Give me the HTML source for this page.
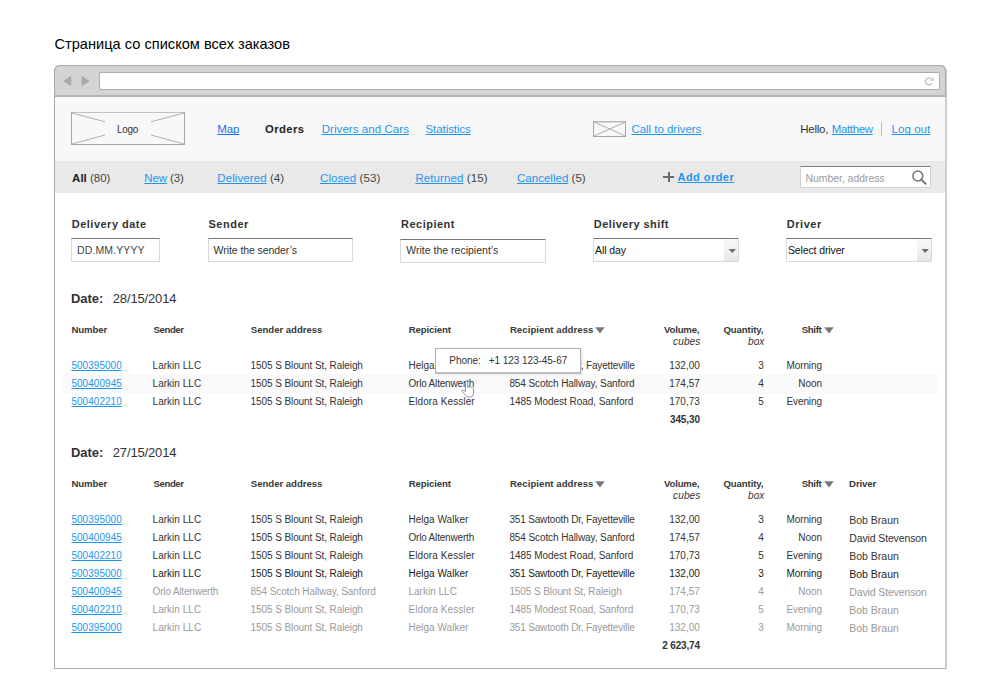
<!DOCTYPE html>
<html><head><meta charset="utf-8">
<style>
html,body{margin:0;padding:0;background:#fff;}
body{width:1000px;height:699px;position:relative;overflow:hidden;font-family:"Liberation Sans",sans-serif;}
.t{position:absolute;white-space:nowrap;text-decoration-skip-ink:none;}
u{text-decoration-skip-ink:none;}
.abs{position:absolute;}
.frame{position:absolute;left:54px;top:65px;width:890px;height:602px;border:1px solid #a9a9a9;border-right:2px solid #cdcdcd;border-radius:6px 6px 0 0;background:#fff;}
.chrome{position:absolute;left:54px;top:65px;width:892px;background:#d4d4d4;border:1px solid #aaa;border-bottom:2px solid #b3b3b3;border-radius:6px 6px 0 0;box-sizing:border-box;height:32px;}
.url{position:absolute;left:99px;top:72px;width:839px;height:16px;background:#fff;border:1px solid #ababab;border-radius:2px;}
.nav{position:absolute;left:55px;top:97px;width:890px;height:64px;background:#f8f8f8;}
.tabs{position:absolute;left:55px;top:161px;width:890px;height:32px;background:#e9e9e9;}
.inp{position:absolute;background:#fff;border:1px solid #d9d9d9;border-top-color:#777;}
</style></head><body>
<div class="t" style="top:35.24px;height:19px;line-height:19px;font-size:14.6px;color:#000;letter-spacing:0.010px;left:54.5px;">Страница со списком всех заказов</div>
<div class="frame"></div>
<div class="chrome"></div>
<div class="url"></div>
<svg class="abs" style="left:60px;top:72px" width="36" height="18" viewBox="0 0 36 18">
<path d="M3 9 L11.2 3.8 L11.2 14.2 Z" fill="#a9a9a9"/><path d="M21.6 3.8 L29.9 9 L21.6 14.2 Z" fill="#a9a9a9"/></svg>
<svg class="abs" style="left:922px;top:75px" width="14" height="13" viewBox="0 0 14 13">
<path d="M9.6 4.2 A3.4 3.4 0 1 0 9.94 8.1" fill="none" stroke="#c9c9c9" stroke-width="1.7"/><path d="M7.8 5.7 L11.7 2.2 L11.7 5.9 Z" fill="#c9c9c9"/></svg>
<div class="nav"></div>
<svg class="abs" style="left:71px;top:112px" width="114" height="33" viewBox="0 0 114 33">
<rect x="0.5" y="0.5" width="113" height="32" fill="none" stroke="#a6a6a6"/><path d="M1 0.5 L113 0.5" stroke="#c2c2c2" stroke-width="1"/>
<path d="M1 1 L34 9.8 M113 1 L80 9.8 M1 32 L34 23 M113 32 L80 23" stroke="#b0b0b0" stroke-width="1"/></svg>
<div class="t" style="top:123.03px;height:13px;line-height:13px;font-size:10px;color:#333;letter-spacing:-0.250px;left:-72.5px;width:400px;text-align:center;">Logo</div>
<div class="t" style="top:122.11px;height:15px;line-height:15px;font-size:11.5px;color:#1a6ff0;text-decoration:underline;letter-spacing:-0.094px;left:217.3px;">Map</div>
<div class="t" style="top:122.18px;height:15px;line-height:15px;font-size:11.3px;color:#222;font-weight:bold;letter-spacing:0.408px;left:265px;">Orders</div>
<div class="t" style="top:122.11px;height:15px;line-height:15px;font-size:11.5px;color:#1e96f0;text-decoration:underline;letter-spacing:0.065px;left:321.7px;">Drivers and Cars</div>
<div class="t" style="top:122.11px;height:15px;line-height:15px;font-size:11.5px;color:#1e96f0;text-decoration:underline;letter-spacing:-0.076px;left:425.5px;">Statistics</div>
<svg class="abs" style="left:593px;top:121px" width="34" height="16" viewBox="0 0 34 16">
<rect x="0.5" y="0.5" width="32" height="15" fill="none" stroke="#a6a6a6"/>
<path d="M0.5 1 L32.5 1" stroke="#c0c0c0" stroke-width="1"/>
<path d="M1 1 L32.5 15 M32.5 1 L1 15" stroke="#b0b0b0" stroke-width="1"/></svg>
<div class="t" style="top:122.11px;height:15px;line-height:15px;font-size:11.5px;color:#1e96f0;text-decoration:underline;letter-spacing:-0.025px;left:631.4px;">Call to drivers</div>
<div class="t" style="top:122.11px;height:15px;line-height:15px;font-size:11.5px;color:#333;letter-spacing:-0.237px;left:800.2px;">Hello,</div>
<div class="t" style="top:122.11px;height:15px;line-height:15px;font-size:11.5px;color:#1e96f0;text-decoration:underline;letter-spacing:-0.342px;left:831.7px;">Matthew</div>
<div class="abs" style="left:881px;top:122px;width:1px;height:14px;background:#bbb"></div>
<div class="t" style="top:122.11px;height:15px;line-height:15px;font-size:11.5px;color:#1e96f0;text-decoration:underline;letter-spacing:0.038px;left:891.6px;">Log out</div>
<div class="tabs"></div>
<div class="t" style="top:170.51px;height:15px;line-height:15px;font-size:11.5px;color:#444;left:72.1px;"><b style="color:#222">All</b> (80)</div>
<div class="t" style="top:170.51px;height:15px;line-height:15px;font-size:11.5px;color:#444;letter-spacing:-0.123px;left:144.3px;"><u style="color:#1e96f0">New</u> (3)</div>
<div class="t" style="top:170.51px;height:15px;line-height:15px;font-size:11.5px;color:#444;letter-spacing:0.086px;left:217.3px;"><u style="color:#1e96f0">Delivered</u> (4)</div>
<div class="t" style="top:170.51px;height:15px;line-height:15px;font-size:11.5px;color:#444;letter-spacing:0.087px;left:320px;"><u style="color:#1e96f0">Closed</u> (53)</div>
<div class="t" style="top:170.51px;height:15px;line-height:15px;font-size:11.5px;color:#444;letter-spacing:0.093px;left:415.4px;"><u style="color:#1e96f0">Returned</u> (15)</div>
<div class="t" style="top:170.51px;height:15px;line-height:15px;font-size:11.5px;color:#444;letter-spacing:0.025px;left:517px;"><u style="color:#1e96f0">Cancelled</u> (5)</div>
<div class="abs" style="left:663px;top:176px;width:11px;height:2px;background:#6a6a6a"></div>
<div class="abs" style="left:667.5px;top:172px;width:2px;height:10px;background:#6a6a6a"></div>
<div class="t" style="top:170.49px;height:14px;line-height:14px;font-size:11px;color:#1e96f0;font-weight:bold;text-decoration:underline;letter-spacing:0.457px;left:677.5px;">Add order</div>
<div class="abs" style="left:800px;top:166px;width:129px;height:20px;background:#fff;border:1px solid #cfcfcf;border-top-color:#808080"></div>
<div class="t" style="top:171.36px;height:14px;line-height:14px;font-size:10.5px;color:#9a9a9a;letter-spacing:-0.061px;left:805.5px;">Number, address</div>
<svg class="abs" style="left:908px;top:167px" width="20" height="20" viewBox="0 0 20 20">
<circle cx="9.8" cy="9" r="4.9" fill="none" stroke="#727272" stroke-width="1.5"/><path d="M13.4 12.6 L17.6 16.8" stroke="#727272" stroke-width="2" stroke-linecap="round"/></svg>
<div class="t" style="top:217.19px;height:14px;line-height:14px;font-size:11px;color:#333;font-weight:bold;letter-spacing:0.485px;left:71.8px;">Delivery date</div>
<div class="t" style="top:217.19px;height:14px;line-height:14px;font-size:11px;color:#333;font-weight:bold;letter-spacing:0.501px;left:208.5px;">Sender</div>
<div class="t" style="top:217.19px;height:14px;line-height:14px;font-size:11px;color:#333;font-weight:bold;letter-spacing:0.491px;left:401px;">Recipient</div>
<div class="t" style="top:217.19px;height:14px;line-height:14px;font-size:11px;color:#333;font-weight:bold;letter-spacing:0.423px;left:593.8px;">Delivery shift</div>
<div class="t" style="top:217.19px;height:14px;line-height:14px;font-size:11px;color:#333;font-weight:bold;letter-spacing:0.538px;left:786.8px;">Driver</div>
<div class="inp" style="left:71px;top:238px;width:87px;height:22px"></div>
<div class="t" style="top:243.36px;height:14px;line-height:14px;font-size:10.5px;color:#444;letter-spacing:0.121px;left:77px;">DD.MM.YYYY</div>
<div class="inp" style="left:208px;top:238px;width:143px;height:22px"></div>
<div class="t" style="top:242.86px;height:14px;line-height:14px;font-size:10.5px;color:#333;letter-spacing:-0.071px;left:213.6px;">Write the sender’s</div>
<div class="inp" style="left:400px;top:239px;width:144px;height:22px"></div>
<div class="t" style="top:243.16px;height:14px;line-height:14px;font-size:10.5px;color:#333;letter-spacing:0.010px;left:406.2px;">Write the recipient’s</div>
<div class="inp" style="left:593px;top:238px;width:144px;height:22px"></div>
<div class="abs" style="left:724px;top:239px;width:14px;height:22px;background:linear-gradient(#f8f8f8,#f2f2f2 45%,#e6e6e6)"></div>
<svg class="abs" style="left:728px;top:248px" width="9" height="6" viewBox="0 0 9 6"><path d="M0.5 1 L8 1 L4.25 5 Z" fill="#6e6e6e"/></svg>
<div class="t" style="top:243.36px;height:14px;line-height:14px;font-size:10.5px;color:#111;letter-spacing:-0.100px;left:595px;">All day</div>
<div class="inp" style="left:786px;top:238px;width:144px;height:22px"></div>
<div class="abs" style="left:917px;top:239px;width:14px;height:22px;background:linear-gradient(#f8f8f8,#f2f2f2 45%,#e6e6e6)"></div>
<svg class="abs" style="left:921px;top:248px" width="9" height="6" viewBox="0 0 9 6"><path d="M0.5 1 L8 1 L4.25 5 Z" fill="#6e6e6e"/></svg>
<div class="t" style="top:243.36px;height:14px;line-height:14px;font-size:10.5px;color:#111;letter-spacing:-0.116px;left:787.9px;">Select driver</div>
<div class="t" style="top:290.49px;height:17px;line-height:17px;font-size:13px;color:#333;font-weight:bold;letter-spacing:-0.055px;left:71px;">Date:</div>
<div class="t" style="top:290.49px;height:17px;line-height:17px;font-size:13px;color:#333;letter-spacing:-0.158px;left:112.8px;">28/15/2014</div>
<div class="t" style="top:323.97px;height:12px;line-height:12px;font-size:9.6px;color:#383838;font-weight:bold;letter-spacing:-0.084px;left:71.5px;">Number</div>
<div class="t" style="top:323.97px;height:12px;line-height:12px;font-size:9.6px;color:#383838;font-weight:bold;letter-spacing:-0.422px;left:153.6px;">Sender</div>
<div class="t" style="top:323.97px;height:12px;line-height:12px;font-size:9.6px;color:#383838;font-weight:bold;letter-spacing:-0.025px;left:250.8px;">Sender address</div>
<div class="t" style="top:323.97px;height:12px;line-height:12px;font-size:9.6px;color:#383838;font-weight:bold;letter-spacing:-0.122px;left:408.7px;">Repicient</div>
<div class="t" style="top:323.97px;height:12px;line-height:12px;font-size:9.6px;color:#383838;font-weight:bold;letter-spacing:0.056px;left:509.9px;">Recipient address</div>
<svg class="abs" style="left:595.3px;top:327.0px" width="10" height="7" viewBox="0 0 10 7"><path d="M0.6 0.4 L9.4 0.4 L5 6.3 Z" fill="#777" stroke="#777" stroke-width="0.4" stroke-linejoin="round"/></svg>
<div class="t" style="top:323.97px;height:12px;line-height:12px;font-size:9.6px;color:#383838;font-weight:bold;letter-spacing:-0.192px;right:300.69px;text-align:right;">Volume,</div>
<div class="t" style="top:335.33px;height:13px;line-height:13px;font-size:10px;color:#333;font-style:italic;letter-spacing:0.150px;right:299.55px;text-align:right;">cubes</div>
<div class="t" style="top:323.97px;height:12px;line-height:12px;font-size:9.6px;color:#383838;font-weight:bold;letter-spacing:-0.105px;right:236.60px;text-align:right;">Quantity,</div>
<div class="t" style="top:335.33px;height:13px;line-height:13px;font-size:10px;color:#333;font-style:italic;right:235.80px;text-align:right;">box</div>
<div class="t" style="top:323.97px;height:12px;line-height:12px;font-size:9.6px;color:#383838;font-weight:bold;letter-spacing:-0.295px;right:178.49px;text-align:right;">Shift</div>
<svg class="abs" style="left:823.6px;top:327.0px" width="10" height="7" viewBox="0 0 10 7"><path d="M0.6 0.4 L9.4 0.4 L5 6.3 Z" fill="#777" stroke="#777" stroke-width="0.4" stroke-linejoin="round"/></svg>
<div class="t" style="top:359.03px;height:13px;line-height:13px;font-size:10px;color:#1e96f0;text-decoration:underline;letter-spacing:0.038px;left:71.4px;">500395000</div>
<div class="t" style="top:359.03px;height:13px;line-height:13px;font-size:10px;color:#333;letter-spacing:0.017px;left:152.6px;">Larkin LLC</div>
<div class="t" style="top:359.03px;height:13px;line-height:13px;font-size:10px;color:#333;letter-spacing:-0.092px;left:250.6px;">1505 S Blount St, Raleigh</div>
<div class="t" style="top:359.03px;height:13px;line-height:13px;font-size:10px;color:#333;letter-spacing:0.032px;left:408.4px;">Helga Walker</div>
<div class="t" style="top:359.03px;height:13px;line-height:13px;font-size:10px;color:#333;letter-spacing:-0.168px;left:509.4px;">351 Sawtooth Dr, Fayetteville</div>
<div class="t" style="top:359.03px;height:13px;line-height:13px;font-size:10px;color:#333;right:300.20px;text-align:right;">132,00</div>
<div class="t" style="top:359.03px;height:13px;line-height:13px;font-size:10px;color:#333;right:236.20px;text-align:right;">3</div>
<div class="t" style="top:359.03px;height:13px;line-height:13px;font-size:10px;color:#333;letter-spacing:-0.092px;right:178.09px;text-align:right;">Morning</div>
<div class="abs" style="left:63px;top:374.0px;width:876px;height:20px;background:#fafafa"></div>
<div class="t" style="top:377.03px;height:13px;line-height:13px;font-size:10px;color:#1e96f0;text-decoration:underline;letter-spacing:0.044px;left:71.4px;">500400945</div>
<div class="t" style="top:377.03px;height:13px;line-height:13px;font-size:10px;color:#333;letter-spacing:0.017px;left:152.6px;">Larkin LLC</div>
<div class="t" style="top:377.03px;height:13px;line-height:13px;font-size:10px;color:#333;letter-spacing:-0.092px;left:250.6px;">1505 S Blount St, Raleigh</div>
<div class="t" style="top:377.03px;height:13px;line-height:13px;font-size:10px;color:#333;letter-spacing:-0.182px;left:408.4px;">Orlo Altenwerth</div>
<div class="t" style="top:377.03px;height:13px;line-height:13px;font-size:10px;color:#333;letter-spacing:-0.098px;left:509.4px;">854 Scotch Hallway, Sanford</div>
<div class="t" style="top:377.03px;height:13px;line-height:13px;font-size:10px;color:#333;right:300.20px;text-align:right;">174,57</div>
<div class="t" style="top:377.03px;height:13px;line-height:13px;font-size:10px;color:#333;right:236.20px;text-align:right;">4</div>
<div class="t" style="top:377.03px;height:13px;line-height:13px;font-size:10px;color:#333;letter-spacing:-0.050px;right:178.05px;text-align:right;">Noon</div>
<div class="t" style="top:395.03px;height:13px;line-height:13px;font-size:10px;color:#1e96f0;text-decoration:underline;letter-spacing:0.038px;left:71.4px;">500402210</div>
<div class="t" style="top:395.03px;height:13px;line-height:13px;font-size:10px;color:#333;letter-spacing:0.017px;left:152.6px;">Larkin LLC</div>
<div class="t" style="top:395.03px;height:13px;line-height:13px;font-size:10px;color:#333;letter-spacing:-0.092px;left:250.6px;">1505 S Blount St, Raleigh</div>
<div class="t" style="top:395.03px;height:13px;line-height:13px;font-size:10px;color:#333;letter-spacing:0.096px;left:408.4px;">Eldora Kessler</div>
<div class="t" style="top:395.03px;height:13px;line-height:13px;font-size:10px;color:#333;letter-spacing:-0.044px;left:509.4px;">1485 Modest Road, Sanford</div>
<div class="t" style="top:395.03px;height:13px;line-height:13px;font-size:10px;color:#333;right:300.20px;text-align:right;">170,73</div>
<div class="t" style="top:395.03px;height:13px;line-height:13px;font-size:10px;color:#333;right:236.20px;text-align:right;">5</div>
<div class="t" style="top:395.03px;height:13px;line-height:13px;font-size:10px;color:#333;letter-spacing:-0.100px;right:178.10px;text-align:right;">Evening</div>
<div class="t" style="top:413.03px;height:13px;line-height:13px;font-size:10px;color:#333;font-weight:bold;letter-spacing:-0.110px;right:300.11px;text-align:right;">345,30</div>
<div class="t" style="top:444.49px;height:17px;line-height:17px;font-size:13px;color:#333;font-weight:bold;letter-spacing:-0.055px;left:71px;">Date:</div>
<div class="t" style="top:444.49px;height:17px;line-height:17px;font-size:13px;color:#333;letter-spacing:-0.158px;left:112.8px;">27/15/2014</div>
<div class="t" style="top:477.97px;height:12px;line-height:12px;font-size:9.6px;color:#383838;font-weight:bold;letter-spacing:-0.084px;left:71.5px;">Number</div>
<div class="t" style="top:477.97px;height:12px;line-height:12px;font-size:9.6px;color:#383838;font-weight:bold;letter-spacing:-0.422px;left:153.6px;">Sender</div>
<div class="t" style="top:477.97px;height:12px;line-height:12px;font-size:9.6px;color:#383838;font-weight:bold;letter-spacing:-0.025px;left:250.8px;">Sender address</div>
<div class="t" style="top:477.97px;height:12px;line-height:12px;font-size:9.6px;color:#383838;font-weight:bold;letter-spacing:-0.122px;left:408.7px;">Repicient</div>
<div class="t" style="top:477.97px;height:12px;line-height:12px;font-size:9.6px;color:#383838;font-weight:bold;letter-spacing:0.056px;left:509.9px;">Recipient address</div>
<svg class="abs" style="left:595.3px;top:481.0px" width="10" height="7" viewBox="0 0 10 7"><path d="M0.6 0.4 L9.4 0.4 L5 6.3 Z" fill="#777" stroke="#777" stroke-width="0.4" stroke-linejoin="round"/></svg>
<div class="t" style="top:477.97px;height:12px;line-height:12px;font-size:9.6px;color:#383838;font-weight:bold;letter-spacing:-0.192px;right:300.69px;text-align:right;">Volume,</div>
<div class="t" style="top:489.33px;height:13px;line-height:13px;font-size:10px;color:#333;font-style:italic;letter-spacing:0.150px;right:299.55px;text-align:right;">cubes</div>
<div class="t" style="top:477.97px;height:12px;line-height:12px;font-size:9.6px;color:#383838;font-weight:bold;letter-spacing:-0.105px;right:236.60px;text-align:right;">Quantity,</div>
<div class="t" style="top:489.33px;height:13px;line-height:13px;font-size:10px;color:#333;font-style:italic;right:235.80px;text-align:right;">box</div>
<div class="t" style="top:477.97px;height:12px;line-height:12px;font-size:9.6px;color:#383838;font-weight:bold;letter-spacing:-0.295px;right:178.49px;text-align:right;">Shift</div>
<svg class="abs" style="left:823.6px;top:481.0px" width="10" height="7" viewBox="0 0 10 7"><path d="M0.6 0.4 L9.4 0.4 L5 6.3 Z" fill="#777" stroke="#777" stroke-width="0.4" stroke-linejoin="round"/></svg>
<div class="t" style="top:477.97px;height:12px;line-height:12px;font-size:9.6px;color:#383838;font-weight:bold;letter-spacing:-0.135px;left:849.1px;">Driver</div>
<div class="t" style="top:513.03px;height:13px;line-height:13px;font-size:10px;color:#1e96f0;text-decoration:underline;letter-spacing:0.038px;left:71.4px;">500395000</div>
<div class="t" style="top:513.03px;height:13px;line-height:13px;font-size:10px;color:#333;letter-spacing:0.017px;left:152.6px;">Larkin LLC</div>
<div class="t" style="top:513.03px;height:13px;line-height:13px;font-size:10px;color:#333;letter-spacing:-0.092px;left:250.6px;">1505 S Blount St, Raleigh</div>
<div class="t" style="top:513.03px;height:13px;line-height:13px;font-size:10px;color:#333;letter-spacing:0.032px;left:408.4px;">Helga Walker</div>
<div class="t" style="top:513.03px;height:13px;line-height:13px;font-size:10px;color:#333;letter-spacing:-0.168px;left:509.4px;">351 Sawtooth Dr, Fayetteville</div>
<div class="t" style="top:513.03px;height:13px;line-height:13px;font-size:10px;color:#333;right:300.20px;text-align:right;">132,00</div>
<div class="t" style="top:513.03px;height:13px;line-height:13px;font-size:10px;color:#333;right:236.20px;text-align:right;">3</div>
<div class="t" style="top:513.03px;height:13px;line-height:13px;font-size:10px;color:#333;letter-spacing:-0.092px;right:178.09px;text-align:right;">Morning</div>
<div class="t" style="top:512.86px;height:14px;line-height:14px;font-size:10.5px;color:#333;letter-spacing:-0.011px;left:849.3px;">Bob Braun</div>
<div class="t" style="top:531.03px;height:13px;line-height:13px;font-size:10px;color:#1e96f0;text-decoration:underline;letter-spacing:0.044px;left:71.4px;">500400945</div>
<div class="t" style="top:531.03px;height:13px;line-height:13px;font-size:10px;color:#333;letter-spacing:0.017px;left:152.6px;">Larkin LLC</div>
<div class="t" style="top:531.03px;height:13px;line-height:13px;font-size:10px;color:#333;letter-spacing:-0.092px;left:250.6px;">1505 S Blount St, Raleigh</div>
<div class="t" style="top:531.03px;height:13px;line-height:13px;font-size:10px;color:#333;letter-spacing:-0.182px;left:408.4px;">Orlo Altenwerth</div>
<div class="t" style="top:531.03px;height:13px;line-height:13px;font-size:10px;color:#333;letter-spacing:-0.098px;left:509.4px;">854 Scotch Hallway, Sanford</div>
<div class="t" style="top:531.03px;height:13px;line-height:13px;font-size:10px;color:#333;right:300.20px;text-align:right;">174,57</div>
<div class="t" style="top:531.03px;height:13px;line-height:13px;font-size:10px;color:#333;right:236.20px;text-align:right;">4</div>
<div class="t" style="top:531.03px;height:13px;line-height:13px;font-size:10px;color:#333;letter-spacing:-0.050px;right:178.05px;text-align:right;">Noon</div>
<div class="t" style="top:530.86px;height:14px;line-height:14px;font-size:10.5px;color:#333;letter-spacing:-0.133px;left:849.3px;">David Stevenson</div>
<div class="t" style="top:549.03px;height:13px;line-height:13px;font-size:10px;color:#1e96f0;text-decoration:underline;letter-spacing:0.038px;left:71.4px;">500402210</div>
<div class="t" style="top:549.03px;height:13px;line-height:13px;font-size:10px;color:#333;letter-spacing:0.017px;left:152.6px;">Larkin LLC</div>
<div class="t" style="top:549.03px;height:13px;line-height:13px;font-size:10px;color:#333;letter-spacing:-0.092px;left:250.6px;">1505 S Blount St, Raleigh</div>
<div class="t" style="top:549.03px;height:13px;line-height:13px;font-size:10px;color:#333;letter-spacing:0.096px;left:408.4px;">Eldora Kessler</div>
<div class="t" style="top:549.03px;height:13px;line-height:13px;font-size:10px;color:#333;letter-spacing:-0.044px;left:509.4px;">1485 Modest Road, Sanford</div>
<div class="t" style="top:549.03px;height:13px;line-height:13px;font-size:10px;color:#333;right:300.20px;text-align:right;">170,73</div>
<div class="t" style="top:549.03px;height:13px;line-height:13px;font-size:10px;color:#333;right:236.20px;text-align:right;">5</div>
<div class="t" style="top:549.03px;height:13px;line-height:13px;font-size:10px;color:#333;letter-spacing:-0.100px;right:178.10px;text-align:right;">Evening</div>
<div class="t" style="top:548.86px;height:14px;line-height:14px;font-size:10.5px;color:#333;letter-spacing:-0.011px;left:849.3px;">Bob Braun</div>
<div class="t" style="top:567.03px;height:13px;line-height:13px;font-size:10px;color:#1e96f0;text-decoration:underline;letter-spacing:0.038px;left:71.4px;">500395000</div>
<div class="t" style="top:567.03px;height:13px;line-height:13px;font-size:10px;color:#1a1a1a;letter-spacing:0.017px;left:152.6px;">Larkin LLC</div>
<div class="t" style="top:567.03px;height:13px;line-height:13px;font-size:10px;color:#1a1a1a;letter-spacing:-0.092px;left:250.6px;">1505 S Blount St, Raleigh</div>
<div class="t" style="top:567.03px;height:13px;line-height:13px;font-size:10px;color:#1a1a1a;letter-spacing:0.032px;left:408.4px;">Helga Walker</div>
<div class="t" style="top:567.03px;height:13px;line-height:13px;font-size:10px;color:#1a1a1a;letter-spacing:-0.168px;left:509.4px;">351 Sawtooth Dr, Fayetteville</div>
<div class="t" style="top:567.03px;height:13px;line-height:13px;font-size:10px;color:#1a1a1a;right:300.20px;text-align:right;">132,00</div>
<div class="t" style="top:567.03px;height:13px;line-height:13px;font-size:10px;color:#1a1a1a;right:236.20px;text-align:right;">3</div>
<div class="t" style="top:567.03px;height:13px;line-height:13px;font-size:10px;color:#1a1a1a;letter-spacing:-0.092px;right:178.09px;text-align:right;">Morning</div>
<div class="t" style="top:566.86px;height:14px;line-height:14px;font-size:10.5px;color:#1a1a1a;letter-spacing:-0.011px;left:849.3px;">Bob Braun</div>
<div class="t" style="top:585.03px;height:13px;line-height:13px;font-size:10px;color:#1e96f0;text-decoration:underline;letter-spacing:0.044px;left:71.4px;">500400945</div>
<div class="t" style="top:585.03px;height:13px;line-height:13px;font-size:10px;color:#9a9a9a;letter-spacing:-0.182px;left:152.6px;">Orlo Altenwerth</div>
<div class="t" style="top:585.03px;height:13px;line-height:13px;font-size:10px;color:#9a9a9a;letter-spacing:-0.098px;left:250.6px;">854 Scotch Hallway, Sanford</div>
<div class="t" style="top:585.03px;height:13px;line-height:13px;font-size:10px;color:#9a9a9a;letter-spacing:0.017px;left:408.4px;">Larkin LLC</div>
<div class="t" style="top:585.03px;height:13px;line-height:13px;font-size:10px;color:#9a9a9a;letter-spacing:-0.092px;left:509.4px;">1505 S Blount St, Raleigh</div>
<div class="t" style="top:585.03px;height:13px;line-height:13px;font-size:10px;color:#9a9a9a;right:300.20px;text-align:right;">174,57</div>
<div class="t" style="top:585.03px;height:13px;line-height:13px;font-size:10px;color:#9a9a9a;right:236.20px;text-align:right;">4</div>
<div class="t" style="top:585.03px;height:13px;line-height:13px;font-size:10px;color:#9a9a9a;letter-spacing:-0.050px;right:178.05px;text-align:right;">Noon</div>
<div class="t" style="top:584.86px;height:14px;line-height:14px;font-size:10.5px;color:#9a9a9a;letter-spacing:-0.133px;left:849.3px;">David Stevenson</div>
<div class="t" style="top:603.03px;height:13px;line-height:13px;font-size:10px;color:#1e96f0;text-decoration:underline;letter-spacing:0.038px;left:71.4px;">500402210</div>
<div class="t" style="top:603.03px;height:13px;line-height:13px;font-size:10px;color:#9a9a9a;letter-spacing:0.017px;left:152.6px;">Larkin LLC</div>
<div class="t" style="top:603.03px;height:13px;line-height:13px;font-size:10px;color:#9a9a9a;letter-spacing:-0.092px;left:250.6px;">1505 S Blount St, Raleigh</div>
<div class="t" style="top:603.03px;height:13px;line-height:13px;font-size:10px;color:#9a9a9a;letter-spacing:0.096px;left:408.4px;">Eldora Kessler</div>
<div class="t" style="top:603.03px;height:13px;line-height:13px;font-size:10px;color:#9a9a9a;letter-spacing:-0.044px;left:509.4px;">1485 Modest Road, Sanford</div>
<div class="t" style="top:603.03px;height:13px;line-height:13px;font-size:10px;color:#9a9a9a;right:300.20px;text-align:right;">170,73</div>
<div class="t" style="top:603.03px;height:13px;line-height:13px;font-size:10px;color:#9a9a9a;right:236.20px;text-align:right;">5</div>
<div class="t" style="top:603.03px;height:13px;line-height:13px;font-size:10px;color:#9a9a9a;letter-spacing:-0.100px;right:178.10px;text-align:right;">Evening</div>
<div class="t" style="top:602.86px;height:14px;line-height:14px;font-size:10.5px;color:#9a9a9a;letter-spacing:-0.011px;left:849.3px;">Bob Braun</div>
<div class="t" style="top:621.03px;height:13px;line-height:13px;font-size:10px;color:#1e96f0;text-decoration:underline;letter-spacing:0.038px;left:71.4px;">500395000</div>
<div class="t" style="top:621.03px;height:13px;line-height:13px;font-size:10px;color:#9a9a9a;letter-spacing:0.017px;left:152.6px;">Larkin LLC</div>
<div class="t" style="top:621.03px;height:13px;line-height:13px;font-size:10px;color:#9a9a9a;letter-spacing:-0.092px;left:250.6px;">1505 S Blount St, Raleigh</div>
<div class="t" style="top:621.03px;height:13px;line-height:13px;font-size:10px;color:#9a9a9a;letter-spacing:0.032px;left:408.4px;">Helga Walker</div>
<div class="t" style="top:621.03px;height:13px;line-height:13px;font-size:10px;color:#9a9a9a;letter-spacing:-0.168px;left:509.4px;">351 Sawtooth Dr, Fayetteville</div>
<div class="t" style="top:621.03px;height:13px;line-height:13px;font-size:10px;color:#9a9a9a;right:300.20px;text-align:right;">132,00</div>
<div class="t" style="top:621.03px;height:13px;line-height:13px;font-size:10px;color:#9a9a9a;right:236.20px;text-align:right;">3</div>
<div class="t" style="top:621.03px;height:13px;line-height:13px;font-size:10px;color:#9a9a9a;letter-spacing:-0.092px;right:178.09px;text-align:right;">Morning</div>
<div class="t" style="top:620.86px;height:14px;line-height:14px;font-size:10.5px;color:#9a9a9a;letter-spacing:-0.011px;left:849.3px;">Bob Braun</div>
<div class="t" style="top:639.03px;height:13px;line-height:13px;font-size:10px;color:#333;font-weight:bold;letter-spacing:-0.186px;right:300.19px;text-align:right;">2 623,74</div>
<div class="abs" style="left:435px;top:348px;width:144px;height:23px;background:#fff;border:1px solid #b0b0b0;border-bottom:2px solid #bdbdbd;box-shadow:2px 1px 2px rgba(0,0,0,0.07)"></div>
<div class="t" style="top:354.43px;height:13px;line-height:13px;font-size:10px;color:#333;letter-spacing:-0.056px;left:449.3px;">Phone:&nbsp;&nbsp;&nbsp;+1 123 123-45-67</div>
<svg class="abs" style="left:461px;top:379.5px" width="14" height="18" viewBox="0 0 14 18">
<path d="M4.5 1.8 Q5.5 0.2 6.5 1.8 L6.5 7.2 Q7.5 6.2 8.5 7.2 Q9.5 6.4 10.5 7.6 Q11.7 7.2 12.5 8.6 L12.5 13 Q12.5 16.8 9.5 16.8 L6.8 16.8 Q5.2 16.8 3.7 14.3 L1 11.4 Q0.5 10.2 1.9 10.2 L4.5 11.6 Z" fill="#fff" stroke="#9a9a9a" stroke-width="1"/></svg>
</body></html>
